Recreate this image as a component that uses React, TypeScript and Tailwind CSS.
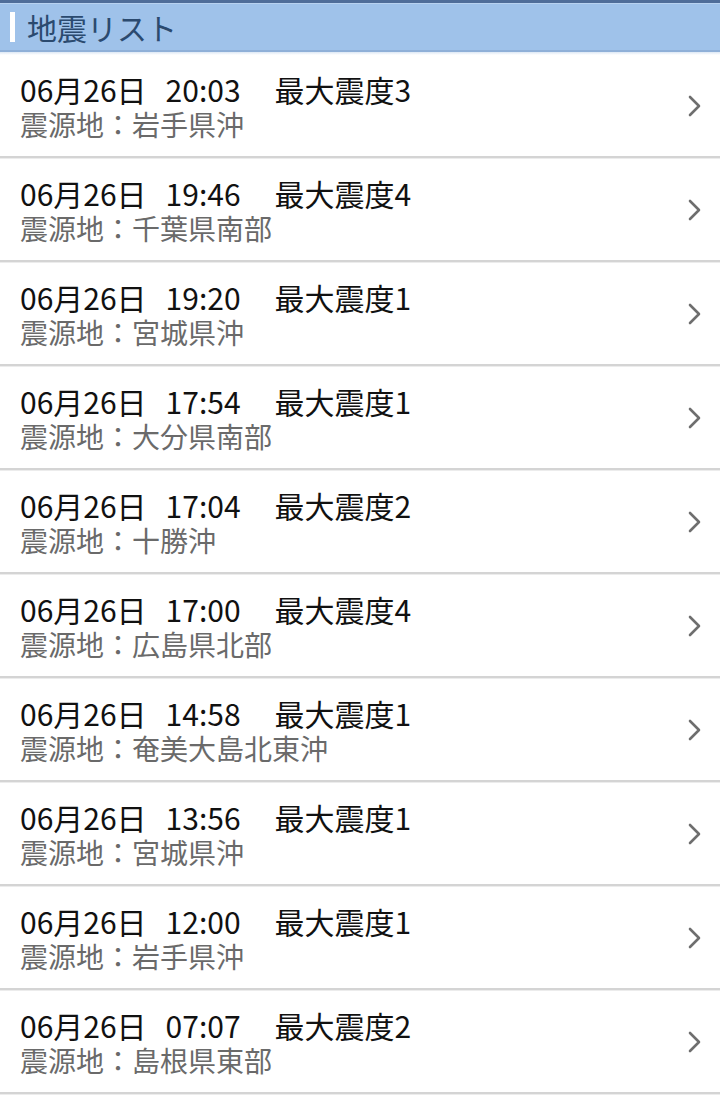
import React from "react";

const rows = [
  ["20:03", "3", "岩手県沖"],
  ["19:46", "4", "千葉県南部"],
  ["19:20", "1", "宮城県沖"],
  ["17:54", "1", "大分県南部"],
  ["17:04", "2", "十勝沖"],
  ["17:00", "4", "広島県北部"],
  ["14:58", "1", "奄美大島北東沖"],
  ["13:56", "1", "宮城県沖"],
  ["12:00", "1", "岩手県沖"],
  ["07:07", "2", "島根県東部"],
];

function Chevron() {
  return (
    <svg width="16" height="24" viewBox="0 0 16 24" className="shrink-0">
      <path d="M3 3 L12 12 L3 21" fill="none" stroke="#6e6e6e" strokeWidth="2.6" strokeLinecap="round" strokeLinejoin="round" />
    </svg>
  );
}

export default function App() {
  return (
    <div
      className="w-[720px] h-[1095px] bg-white overflow-hidden"
      style={{ fontFamily: '"Noto Sans CJK JP", "Noto Sans", sans-serif' }}
    >
      <div className="h-[3px] bg-[#4f6d99]" />
      <div className="h-[1px] bg-[#b8d2f0]" />
      <div className="h-[46px] bg-[#9fc2ea] flex items-center pl-[10px]">
        <div className="w-[5px] h-[30px] bg-white" />
        <span className="ml-[12px] text-[30px] leading-none text-[#2b4a6f]">地震リスト</span>
      </div>
      <div className="h-[2px] bg-[#8fb0d8]" />
      <div className="h-[3px] bg-gradient-to-b from-[#dde8f5] to-white" />
      {rows.map(([time, level, place], i) => (
        <div key={i}>
          <div className="h-[101px] flex items-center pl-[20px] pr-[17px]">
            <div className="flex-1 flex flex-col">
              <div className="text-[30px] leading-[36px] text-[#111] flex">
                <span>06月26日</span>
                <span className="ml-[19px]">{time}</span>
                <span className="ml-[34px]">最大震度{level}</span>
              </div>
              <div className="text-[28px] leading-[34px] text-[#6a6a6a]">震源地：{place}</div>
            </div>
            <Chevron />
          </div>
          <div className="h-[3px] bg-[#d4d4d4] border-b border-[#ececec]" />
        </div>
      ))}
    </div>
  );
}
